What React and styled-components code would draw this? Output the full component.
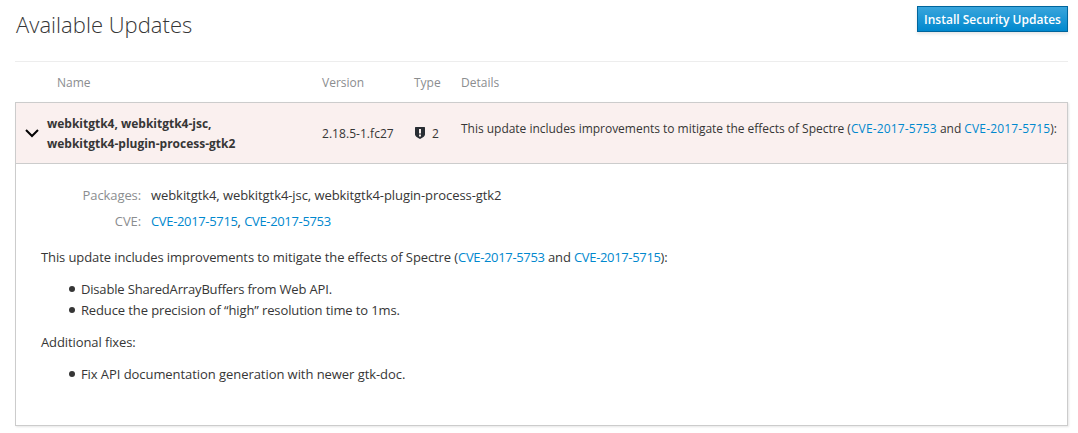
import React from "react";
import styled, { createGlobalStyle, css } from "styled-components";

const Global = createGlobalStyle`
  * { box-sizing: border-box; }
  body { margin: 0; background: #fff; color: #363636; font: 12px/20px "Open Sans", sans-serif; }
`;
const Page = styled.main`
  width: 1078px;
  height: 433px;
  padding: 6px 10px 0 15px;
`;
const Header = styled.header`
  display: flex;
  justify-content: space-between;
  align-items: flex-start;
  height: 56px;
  border-bottom: 1px solid #ededed;
`;
const Title = styled.h2`
  margin: 4px 0 0 1px;
  font-size: 22px;
  line-height: 28px;
  font-weight: 300;
  letter-spacing: 0.03px;
`;
const PrimaryButton = styled.button`
  width: 151px;
  height: 26px;
  padding: 1px 0 0;
  border: 1px solid #00659c;
  background: linear-gradient(#39a5dc, #0088ce);
  box-shadow: 0 2px 3px rgba(3, 3, 3, 0.1);
  color: #fff;
  font: 600 12px/20px "Open Sans", sans-serif;
`;
const columns = css`
  display: grid;
  grid-template-columns: 32px 275px 92px 47px 1fr;
`;
const HeadRow = styled.div`
  ${columns}
  height: 40px;
  padding-top: 2px;
  align-items: center;
  color: #8b8d8f;
`;
const HeadCell = styled.span`
  padding-left: ${(p) => p.$indent || 0}px;
`;
const Panel = styled.section`
  width: 1053px;
  height: 324px;
  border: 1px solid #ccc;
  box-shadow: 1px 1px 2px rgba(3, 3, 3, 0.1);
`;
const UpdateRow = styled.div`
  ${columns}
  grid-template-columns: 31px 275px 92px 47px 1fr;
  height: 61px;
  align-items: center;
  background: #faf0ef;
  border-bottom: 1px solid #ccc;
  white-space: nowrap;
`;
const Toggle = styled.span`
  display: flex;
  padding-left: 9px;
`;
const Name = styled.strong`
  padding-top: 2px;
  font-weight: 700;
  letter-spacing: -0.01px;
`;
const Version = styled.span`
  padding-top: 2px;
  letter-spacing: 0.05px;
`;
const Severity = styled.span`
  display: flex;
  align-items: center;
  gap: 7px;
  padding: 1px 0 0 1px;
  svg { margin-bottom: 1px; }
`;
const Link = styled.a`
  color: #0088ce;
  text-decoration: none;
`;
const Summary = styled.span`
  margin-top: -9px;
  letter-spacing: -0.022px;
  ${Link} { letter-spacing: 0.15px; }
`;
const Body = styled.div`
  padding: 21px 25px;
  font-size: 13px;
  line-height: 21px;
  letter-spacing: -0.1px;
  ${Link} { letter-spacing: -0.34px; }
`;
const Facts = styled.dl`
  display: grid;
  grid-template-columns: 100px 1fr;
  column-gap: 10px;
  row-gap: 5px;
  margin: 0 0 15px;
`;
const Term = styled.dt`
  text-align: right;
  color: #8b8d8f;
`;
const Value = styled.dd`
  margin: 0;
  letter-spacing: -0.07px;
`;
const Paragraph = styled.p`
  margin: 0 0 11px;
`;
const List = styled.ul`
  margin: 0 0 11px;
  padding-left: 40px;
  list-style: none;
`;
const Item = styled.li`
  letter-spacing: ${(p) => p.$tracking}px;
  &::before {
    content: "";
    display: inline-block;
    width: 6px;
    height: 6px;
    margin: 0 6.1px 0 -12.2px;
    border-radius: 50%;
    background: #363636;
    vertical-align: 2px;
  }
`;

const Chevron = () => (
  <svg width="14" height="9" viewBox="0 0 14 9" fill="none" stroke="#030303" strokeWidth="2">
    <path d="M1 1l6 6 6-6" />
  </svg>
);
const Shield = () => (
  <svg width="10" height="12" viewBox="0 0 10 12">
    <path fill="#292e34" fillRule="evenodd" d="M.6 0h8.800q.6 0 .6.6V7.500Q10 9.700 5 12 0 9.700 0 7.500V.6Q0 0 .6 0zM4 2v4.500h2V2zm0 5.500v2h2v-2z" />
  </svg>
);
const Cve = ({ id }) => <Link>{"CVE-2017-" + id}</Link>;
const Intro = () => (
  <>
    This update includes improvements to mitigate the effects of Spectre (<Cve id="5753" /> and <Cve id="5715" />):
  </>
);

export default function App() {
  return (
    <>
      <Global />
      <Page>
        <Header>
          <Title>Available Updates</Title>
          <PrimaryButton>Install Security Updates</PrimaryButton>
        </Header>
        <HeadRow>
          <span />
          <HeadCell $indent={10}>Name</HeadCell>
          <HeadCell>Version</HeadCell>
          <HeadCell>Type</HeadCell>
          <HeadCell>Details</HeadCell>
        </HeadRow>
        <Panel>
          <UpdateRow>
            <Toggle><Chevron /></Toggle>
            <Name>webkitgtk4, webkitgtk4-jsc,<br />webkitgtk4-plugin-process-gtk2</Name>
            <Version>2.18.5-1.fc27</Version>
            <Severity><Shield />2</Severity>
            <Summary><Intro /></Summary>
          </UpdateRow>
          <Body>
            <Facts>
              <Term>Packages:</Term>
              <Value>webkitgtk4, webkitgtk4-jsc, webkitgtk4-plugin-process-gtk2</Value>
              <Term>CVE:</Term>
              <Value><Cve id="5715" />, <Cve id="5753" /></Value>
            </Facts>
            <Paragraph><Intro /></Paragraph>
            <List>
              <Item $tracking={-0.16}>Disable SharedArrayBuffers from Web API.</Item>
              <Item $tracking={-0.11}>Reduce the precision of “high” resolution time to 1ms.</Item>
            </List>
            <Paragraph>Additional fixes:</Paragraph>
            <List>
              <Item $tracking={-0.06}>Fix API documentation generation with newer gtk-doc.</Item>
            </List>
          </Body>
        </Panel>
      </Page>
    </>
  );
}
